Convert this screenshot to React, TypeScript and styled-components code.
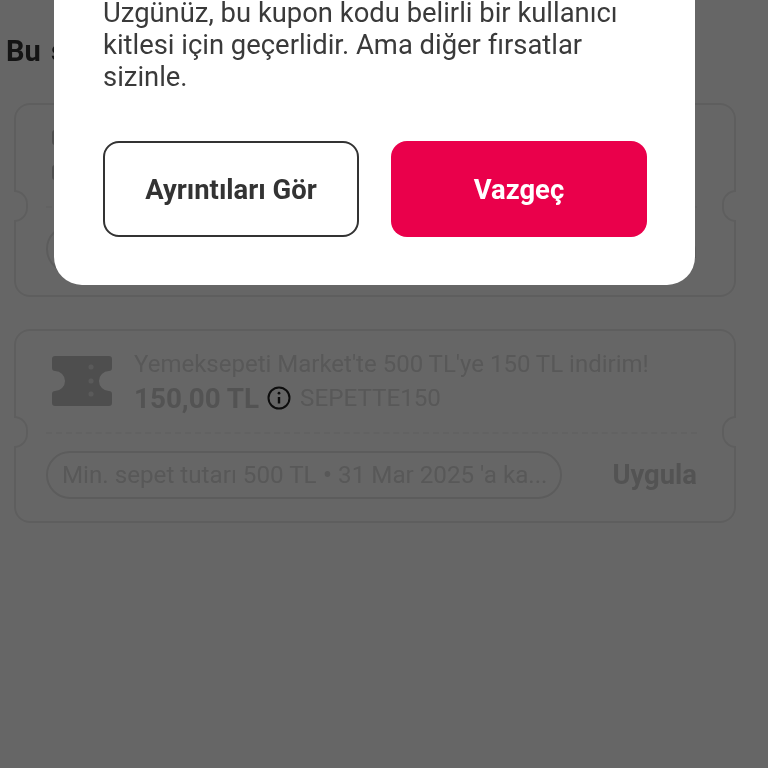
import React from "react";
import styled, { createGlobalStyle } from "styled-components";

const Global = createGlobalStyle`
  html, body { margin: 0; padding: 0; background: #fff; }
  * { box-sizing: border-box; }
`;

const Screen = styled.div`
  position: relative;
  width: 768px;
  height: 768px;
  overflow: hidden;
  font-family: Roboto, "Noto Sans", sans-serif;
  background: #fff;
`;

const Page = styled.div`
  display: flex;
  flex-direction: column;
  padding: 33px 32px 0 14px;
  filter: blur(0.7px);
`;

const Heading = styled.h2`
  margin: 0 0 33px -8px;
  font-size: 29px;
  line-height: 37px;
  font-weight: 700;
  color: #333;
  white-space: nowrap;
  word-spacing: 3px;
`;

const CouponList = styled.div`
  display: flex;
  flex-direction: column;
  gap: 32px;
`;

const Coupon = styled.div`
  position: relative;
  height: 194px;
  border: 2px solid #ececec;
  border-radius: 16px;
  padding: 17px 37px 0 30px;
  display: flex;
  flex-direction: column;
`;

const Notch = styled.span<{ $side: "left" | "right" }>`
  position: absolute;
  top: 85px;
  ${(p) => (p.$side === "left" ? "left: -2px;" : "right: -2px;")}
  width: 14px;
  height: 32px;
  background: #fff;
  border: 2px solid #ececec;
  ${(p) => (p.$side === "left" ? "border-left: 0;" : "border-right: 0;")}
  border-radius: ${(p) => (p.$side === "left" ? "0 16px 16px 0" : "16px 0 0 16px")};
`;

const Top = styled.div`
  display: flex;
  gap: 22px;
  height: 84px;
`;

const TicketBox = styled.div`
  width: 62px;
  padding-top: 8px;
  margin-left: 5px;
`;

const Info = styled.div`
  display: flex;
  flex-direction: column;
  margin-left: -1px;
`;

const Title = styled.div`
  font-size: 24px;
  line-height: 32px;
  color: #dcdcdc;
  white-space: nowrap;
`;

const PriceRow = styled.div`
  display: flex;
  align-items: center;
  gap: 8px;
  height: 36px;
`;

const Price = styled.span`
  font-size: 27.8px;
  font-weight: 700;
  color: #d0d0d0;
  white-space: nowrap;
`;

const Code = styled.span`
  font-size: 24.2px;
  color: #dcdcdc;
  margin-left: 1px;
`;

const Dashed = styled.div`
  border-top: 2px dashed #f4f4f4;
  margin: 0 0 17px 0;
`;

const Bottom = styled.div`
  display: flex;
  align-items: center;
  justify-content: space-between;
`;

const Pill = styled.div`
  width: 516px;
  height: 48px;
  border: 2px solid #e6e6e6;
  border-radius: 24px;
  padding: 0 14px;
  display: flex;
  align-items: center;
  font-size: 24.2px;
  color: #dcdcdc;
  white-space: nowrap;
`;

const Dot = styled.span`
  font-size: 28px;
  line-height: 1;
`;

const Apply = styled.span`
  font-size: 27.4px;
  font-weight: 700;
  color: #d0d0d0;
`;

const Scrim = styled.div`
  position: absolute;
  inset: 0;
  background: rgba(0, 0, 0, 0.6);
`;

const Modal = styled.div`
  position: absolute;
  left: 54px;
  top: -24px;
  width: 641px;
  height: 309px;
  background: #fff;
  border-radius: 0 0 28px 28px;
  padding: 21px 48px 0 49px;
  display: flex;
  flex-direction: column;
  filter: blur(0.3px);
`;

const Message = styled.p`
  margin: 0;
  font-size: 27.4px;
  line-height: 32px;
  color: #3a3a3a;
  height: 144px;
`;

const Actions = styled.div`
  display: grid;
  grid-template-columns: 256px 256px;
  justify-content: space-between;
`;

const Button = styled.button<{ $primary?: boolean }>`
  height: 96px;
  border-radius: 16px;
  padding: 2px 0 0;
  font-family: inherit;
  font-size: 27.4px;
  font-weight: 700;
  border: ${(p) => (p.$primary ? "0" : "2px solid #333")};
  background: ${(p) => (p.$primary ? "#ea004b" : "#fff")};
  color: ${(p) => (p.$primary ? "#fff" : "#333")};
`;

const TicketIcon = () => (
  <svg width="62" height="50" viewBox="0 0 62 50">
    <path
      fill="#c4c4c4"
      d="M4 0h54a3 3 0 0 1 3 3v9a3 3 0 0 1-3 3 9 9 0 0 0 0 20 3 3 0 0 1 3 3v9a3 3 0 0 1-3 3H4a3 3 0 0 1-3-3v-9a3 3 0 0 1 3-3 9 9 0 0 0 0-20 3 3 0 0 1-3-3V3a3 3 0 0 1 3-3z"
    />
    <circle cx="40" cy="11" r="2.5" fill="#e2e2e2" />
    <circle cx="40" cy="25" r="2.5" fill="#e2e2e2" />
    <circle cx="40" cy="38" r="2.5" fill="#e2e2e2" />
  </svg>
);

const InfoIcon = () => (
  <svg width="24" height="24" viewBox="0 0 24 24" fill="none" stroke="#222" strokeWidth="2">
    <circle cx="12" cy="12" r="10.5" />
    <path d="M12 11v6.5" strokeWidth="2.4" />
    <circle cx="12" cy="7.2" r="1.4" fill="#222" stroke="none" />
  </svg>
);

const CouponCard = () => (
  <Coupon>
    <Notch $side="left" />
    <Notch $side="right" />
    <Top>
      <TicketBox>
        <TicketIcon />
      </TicketBox>
      <Info>
        <Title>Yemeksepeti Market'te 500 TL'ye 150 TL indirim!</Title>
        <PriceRow>
          <Price>150,00 TL</Price>
          <InfoIcon />
          <Code>SEPETTE150</Code>
        </PriceRow>
      </Info>
    </Top>
    <Dashed />
    <Bottom>
      <Pill>
        Min. sepet tutarı 500 TL&nbsp;<Dot>•</Dot>&nbsp;31 Mar 2025 'a ka...
      </Pill>
      <Apply>Uygula</Apply>
    </Bottom>
  </Coupon>
);

export default function App() {
  return (
    <Screen>
      <Global />
      <Page>
        <Heading>Bu sepet için kuponlar</Heading>
        <CouponList>
          <CouponCard />
          <CouponCard />
        </CouponList>
      </Page>
      <Scrim />
      <Modal>
        <Message>
          Üzgünüz, bu kupon kodu belirli bir kullanıcı kitlesi için geçerlidir. Ama diğer fırsatlar sizinle.
        </Message>
        <Actions>
          <Button>Ayrıntıları Gör</Button>
          <Button $primary>Vazgeç</Button>
        </Actions>
      </Modal>
    </Screen>
  );
}
